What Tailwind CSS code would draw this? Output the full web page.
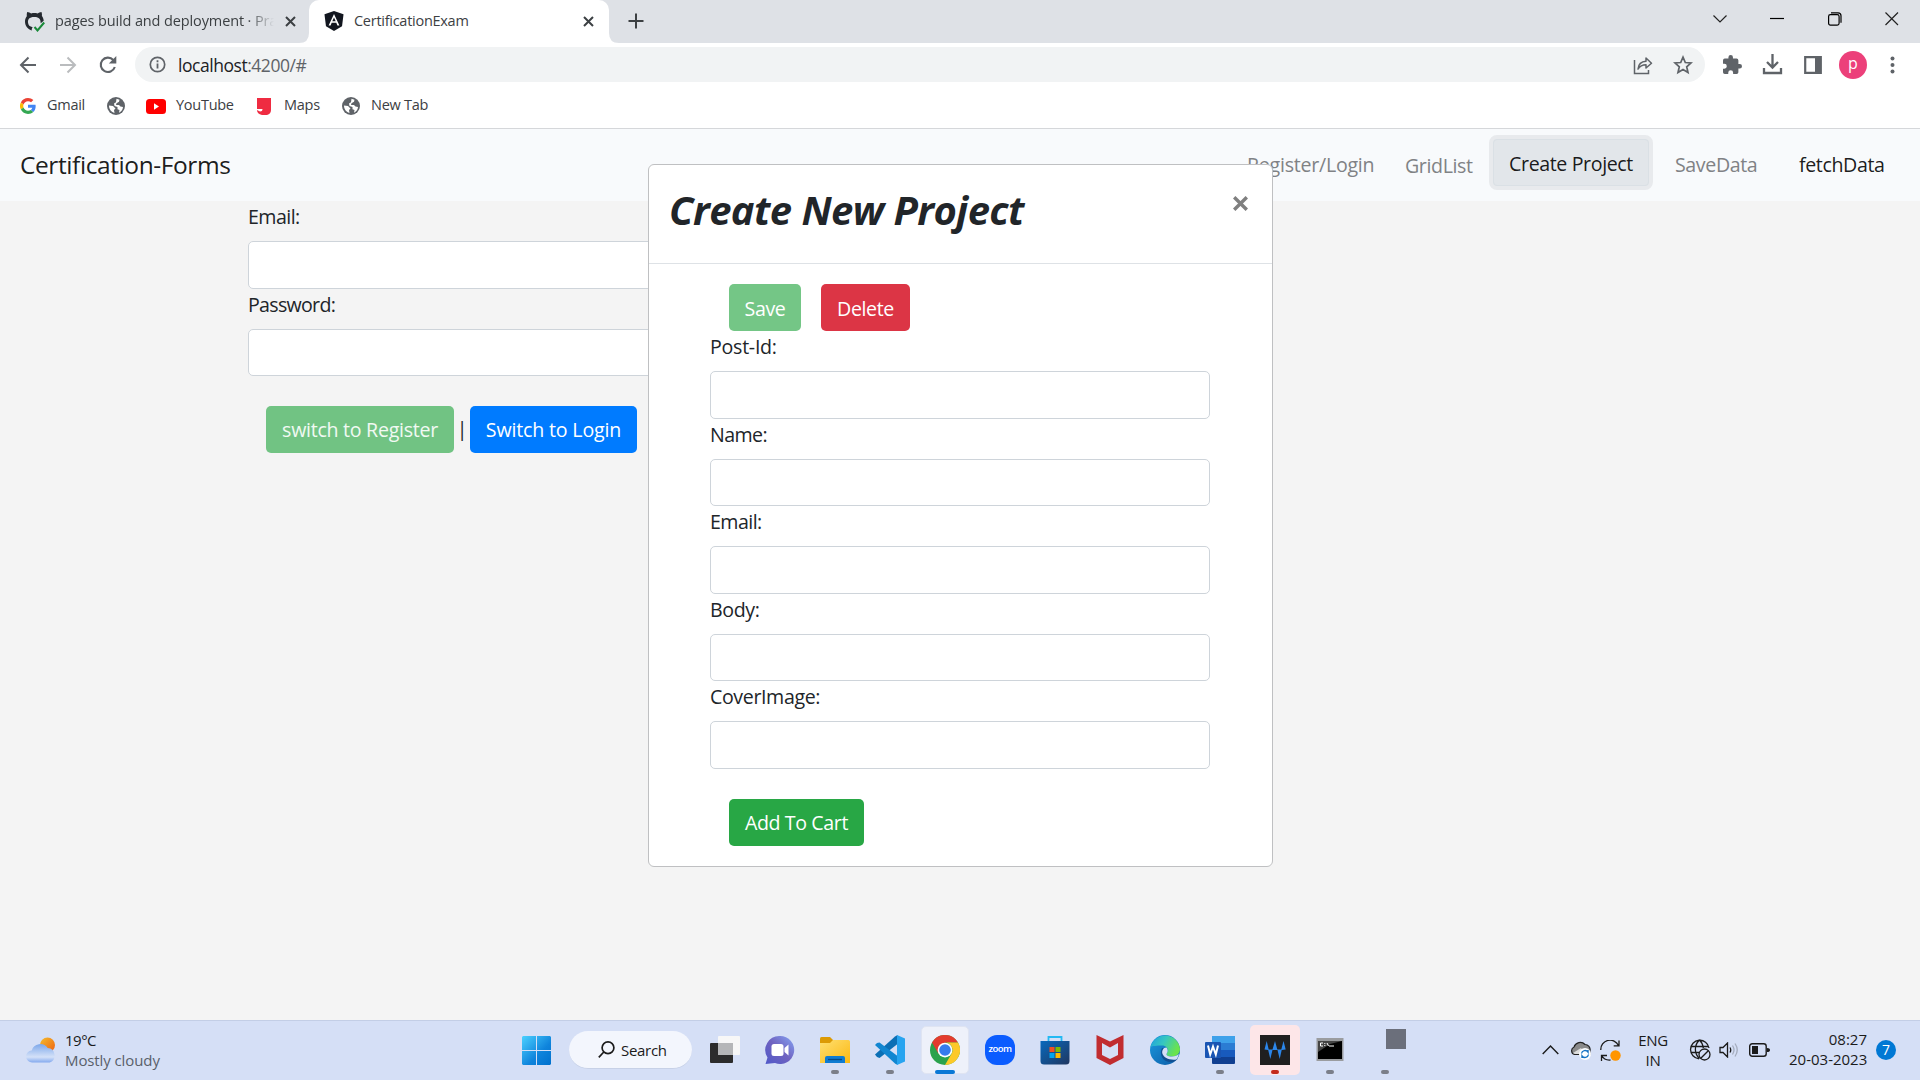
<!DOCTYPE html>
<html lang="en">
<head>
<meta charset="utf-8">
<title>CertificationExam</title>
<script src="https://cdn.jsdelivr.net/npm/@tailwindcss/browser@4"></script>
</head>
<body class="w-[1920px] h-[1080px] overflow-hidden flex flex-col whitespace-nowrap bg-[#f4f4f4] font-['Open_Sans','Noto_Sans',sans-serif] text-[#212529]">

<!-- Tab strip -->
<header class="h-[43px] shrink-0 bg-[#dee1e6] flex text-[14.500px] leading-[20px] text-[#3c4043]">
  <div class="w-[299px] flex items-center pl-[24px] pb-px">
    <svg class="size-[21px] shrink-0" viewBox="0 0 21 21"><path d="M7.5 19.5C3.5 18 1 14.700 1 10.500 1 8.500 1.600 6.700 2.800 5.200 2.600 3.700 2.800 2.200 3.200 1c1.500.1 2.900.7 4 1.500 2-.6 4.300-.6 6.300 0C14.700 1.600 16 1.100 17.500 1c.5 1.300.6 2.700.4 4.100 1 1.300 1.700 2.900 1.800 4.700l-3 2.400c0-4-1.300-6.300-6.400-6.300-5.200 0-6.600 2.300-6.300 5.700.2 2.700 1.700 4.100 4.700 4.600-.8.800-1 1.700-1 3.300z" fill="#24292f"/><path d="M10.500 16l3 3.500 6.700-8" fill="none" stroke="#1a8a3a" stroke-width="2"/></svg>
    <div class="ml-[10px] w-[219px] overflow-hidden tracking-[-0.120px] [mask-image:linear-gradient(to_right,black_88%,transparent)]">pages build and deployment · Pra</div>
    <svg class="ml-[11px] size-[11px] shrink-0" viewBox="0 0 11 11" stroke="#3c4043" stroke-width="2"><path d="M1 1l9 9M10 1l-9 9"/></svg>
  </div>
  <svg class="w-[10px] h-full shrink-0" viewBox="0 0 10 43"><path d="M10 33v10H0Q10 43 10 33z" fill="#fff"/></svg>
  <div class="w-[300px] rounded-t-[10px] bg-white flex items-center pl-[15px] pb-px">
    <svg class="size-[20px] shrink-0" viewBox="0 0 20 20"><path d="M10 0l9.500 3.300-1.500 12L10 20l-8-4.700-1.500-12z" fill="#12161f"/><path d="M10 3L4.600 14.500h2l1.100-2.700h4.600l1.100 2.700h2zm0 3.600l1.700 3.700H8.300z" fill="#fff" fill-rule="evenodd"/></svg>
    <span class="ml-[10px] w-[229px] tracking-[-0.270px]">CertificationExam</span>
    <svg class="size-[11px] shrink-0" viewBox="0 0 11 11" stroke="#3c4043" stroke-width="2"><path d="M1 1l9 9M10 1l-9 9"/></svg>
  </div>
  <svg class="w-[10px] h-full shrink-0" viewBox="0 0 10 43"><path d="M0 33v10h10Q0 43 0 33z" fill="#fff"/></svg>
  <svg class="ml-[9px] mt-[13px] size-[16px]" viewBox="0 0 16 16" stroke="#3c4043" stroke-width="2"><path d="M8 .5v15M.5 8h15"/></svg>
  <div class="ml-auto mr-[21px] flex gap-[43.500px] pt-[12px] text-black">
    <svg class="size-[14px]" viewBox="0 0 14 14" fill="none" stroke="#222" stroke-width="1.200"><path d="M.5 3.500L7 10l6.500-6.500"/></svg>
    <svg class="size-[14px]" viewBox="0 0 14 14" stroke="#000" stroke-width="1.200"><path d="M0 6.500h14"/></svg>
    <svg class="size-[14px]" viewBox="0 0 14 14" fill="none" stroke="#000" stroke-width="1.200"><rect x=".6" y="2.600" width="10.500" height="10.500" rx="1.800"/><path d="M3 .8h7q3 0 3 3v7"/></svg>
    <svg class="size-[14px]" viewBox="0 0 14 14" stroke="#222" stroke-width="1.200"><path d="M.5.5l12.500 12.500M13 .5L.5 13"/></svg>
  </div>
</header>

<!-- Toolbar -->
<div class="h-[43px] shrink-0 bg-white flex items-center pl-[19px]">
  <svg class="size-[18px]" viewBox="0 0 18 18" fill="none" stroke="#5f6368" stroke-width="2"><path d="M17 9H2.500M9.500 1.500L2 9l7.500 7.500"/></svg>
  <svg class="ml-[22px] size-[18px]" viewBox="0 0 18 18" fill="none" stroke="#babcbe" stroke-width="2"><path d="M1 9h14.500M8.500 1.500L16 9l-7.500 7.500"/></svg>
  <svg class="ml-[22px] size-[18px]" viewBox="0 0 18 18"><path d="M15.800 11A7.200 7.200 0 1 1 14.300 4" fill="none" stroke="#5f6368" stroke-width="2.100"/><path d="M17.300 0v7.500H9.800z" fill="#5f6368"/></svg>
  <div class="ml-[18px] h-[35px] w-[1570px] rounded-full bg-[#f1f3f4] flex items-center pl-[14px]">
    <svg class="size-[17px]" viewBox="0 0 17 17"><circle cx="8.500" cy="8.500" r="7.200" fill="none" stroke="#5f6368" stroke-width="1.700"/><path d="M8.500 7.500v5M8.500 4.300v1.900" stroke="#5f6368" stroke-width="1.800"/></svg>
    <span class="ml-[12px] text-[17.500px] leading-[24px] tracking-[-0.460px] text-[#5f6368]"><span class="text-[#202124]">localhost</span>:4200/#</span>
    <svg class="ml-auto size-[20px]" viewBox="0 0 20 20" fill="none" stroke="#5f6368" stroke-width="1.500"><path d="M1.500 5v13.500h14V15"/><path d="M5 14c.5-5 3.500-7.500 8-7.700V3l5.500 5.200L13 13V9.800c-3.500 0-6 1-8 4.200z" stroke-linejoin="round"/></svg>
    <svg class="ml-[20px] mr-[12px] size-[20px]" viewBox="0 0 20 20" fill="none" stroke="#5f6368" stroke-width="1.700"><path d="M10 2.200l2.300 5.300 5.700.5-4.300 3.800 1.300 5.700-5-3-5 3 1.300-5.700L2 8l5.700-.5z"/></svg>
  </div>
  <svg class="ml-[18px] size-[19px]" viewBox="2 1 21 21" fill="#5f6368"><path d="M20.500 11H19V7a2 2 0 0 0-2-2h-4V3.500a2.500 2.500 0 0 0-5 0V5H4a2 2 0 0 0-2 2v3.800h1.500a2.700 2.700 0 0 1 0 5.400H2V20a2 2 0 0 0 2 2h3.800v-1.500a2.700 2.700 0 0 1 5.400 0V22H17a2 2 0 0 0 2-2v-4h1.500a2.500 2.500 0 0 0 0-5z"/></svg>
  <svg class="ml-[20px] size-[21px]" viewBox="0 0 21 21" fill="none" stroke="#5f6368" stroke-width="2.300"><path d="M10.500 0v13M5 8l5.500 5.500L16 8M2 14v5h17v-5"/></svg>
  <svg class="ml-[21px] size-[18px]" viewBox="0 0 18 18"><path d="M1.200 1.200h15.600v15.600H1.200z" fill="none" stroke="#5f6368" stroke-width="2.200"/><path d="M11 1h6v16h-6z" fill="#5f6368"/></svg>
  <div class="ml-[17px] size-[28px] rounded-full bg-[#ec407a] text-white text-[16px] leading-[25px] text-center">p</div>
  <svg class="ml-[23px] h-[18px] w-[5px]" viewBox="0 0 5 18" fill="#5f6368"><circle cx="2.500" cy="2.500" r="2"/><circle cx="2.500" cy="9" r="2"/><circle cx="2.500" cy="15.500" r="2"/></svg>
</div>

<!-- Bookmarks -->
<div class="h-[43px] shrink-0 bg-white border-b border-[#d5d7da] flex items-center text-[14.500px] leading-[20px] tracking-[-0.270px] text-[#3c4043] pl-[20px] pb-[2px] *:[span]:-mt-[2px]">
  <svg class="size-[16px]" viewBox="0 0 48 48"><path fill="#EA4335" d="M24 9.500c3.500 0 6.700 1.200 9.200 3.600l6.900-6.900C35.900 2.400 30.500 0 24 0 14.600 0 6.500 5.400 2.600 13.200l8 6.200C12.400 13.700 17.700 9.500 24 9.500z"/><path fill="#4285F4" d="M47 24.500c0-1.600-.2-3.100-.4-4.500H24v9h12.900c-.6 3-2.300 5.500-4.800 7.200l7.700 6C44.400 38 47 31.800 47 24.500z"/><path fill="#FBBC05" d="M10.500 28.600a14.500 14.500 0 0 1 0-9.200l-8-6.200a24 24 0 0 0 0 21.600z"/><path fill="#34A853" d="M24 48c6.500 0 11.900-2.100 15.900-5.800l-7.700-6c-2.200 1.400-4.900 2.300-8.200 2.300-6.300 0-11.600-4.200-13.500-9.900l-8 6.200C6.500 42.600 14.600 48 24 48z"/></svg>
  <span class="ml-[11px] w-[60px]">Gmail</span>
  <svg class="size-[18px]" viewBox="0 0 18 18"><circle cx="9" cy="9" r="9" fill="#5f6368"/><path d="M2 8.500l4 .5 2.500 2.500L7 13l.5 3C4.500 15 2 12.500 2 8.500zM9.500 1.800l3 1-.5 2-2.500 1.400-.5 1.800h3l1.500 1.500 2.500.5c-.2 2.800-1.800 4.800-4 5.800L12.500 13l-2-.8V10L7.500 9 7 6.500l2-1.300z" fill="#fff"/></svg>
  <svg class="ml-[21px] w-[20px] h-[15px]" viewBox="0 0 20 15"><rect width="20" height="15" rx="3.500" fill="#f00"/><path d="M8 4.300v6.400l5-3.200z" fill="#fff"/></svg>
  <span class="ml-[10px] w-[81px]">YouTube</span>
  <svg class="w-[14px] h-[17px]" viewBox="0 0 14 17"><path d="M0 0h14v12q0 4-4 5H5q-5-1-5-5l3 1.500q2.500 0 2.500-2.500H0z" fill="#ef2b41"/></svg>
  <span class="ml-[13px] w-[58px]">Maps</span>
  <svg class="size-[18px]" viewBox="0 0 18 18"><circle cx="9" cy="9" r="9" fill="#5f6368"/><path d="M2 8.500l4 .5 2.500 2.500L7 13l.5 3C4.500 15 2 12.500 2 8.500zM9.500 1.800l3 1-.5 2-2.500 1.400-.5 1.800h3l1.500 1.500 2.500.5c-.2 2.800-1.800 4.800-4 5.800L12.500 13l-2-.8V10L7.500 9 7 6.500l2-1.300z" fill="#fff"/></svg>
  <span class="ml-[11px]">New Tab</span>
</div>

<!-- Application -->
<main class="relative grow text-[19.600px] leading-[30px] tracking-[-0.380px]">
  <nav class="h-[72px] bg-[#f8fafc] flex items-start pl-[20px] pt-[6px]">
    <span class="mt-[11px] text-[24.500px] leading-[38px] tracking-[-0.410px] text-black/90">Certification-Forms</span>
    <div class="ml-auto mr-[36px] flex items-start text-[#808285]">
      <span class="mt-[15px] w-[158px] tracking-[-0.250px]">Register/Login</span>
      <span class="mt-[16px] w-[84px]">GridList</span>
      <button class="h-[55px] w-[164px] rounded-[8px] border-[4px] border-[#e8eaed] bg-[#e2e6ea] text-black/90"><span class="block h-[47px] rounded-[4px] border border-[#dae0e5] pt-[9px]">Create Project</span></button>
      <span class="ml-[22px] mt-[15px] w-[124px]">SaveData</span>
      <span class="mt-[15px] w-[85px] text-black/90">fetchData</span>
    </div>
  </nav>
  <form class="ml-[248px] w-[620px]">
    <label class="block pt-px mb-[9px] tracking-[-0.550px]">Email:</label>
    <input class="block h-[47.500px] w-full rounded-[5px] border border-[#ced4da] bg-white">
    <label class="block pt-px mb-[9px] tracking-[-0.700px]">Password:</label>
    <input class="block h-[47.500px] w-full rounded-[5px] border border-[#ced4da] bg-white">
    <div class="mt-[29.500px] ml-[18px] flex items-center">
      <button type="button" class="h-[47.500px] w-[188px] rounded-[5px] bg-[#71c383] pt-[2px] tracking-[-0.280px] text-white/90">switch to Register</button>
      <span class="w-[16px] text-center">|</span>
      <button type="button" class="h-[47.500px] w-[167px] rounded-[5px] bg-[#007bff] pt-[2px] tracking-[-0.170px] text-white">Switch to Login</button>
    </div>
  </form>

  <!-- Modal -->
  <section class="absolute left-[648px] top-[35px] w-[625px] h-[703px] rounded-[6px] border border-[#bfc0c2] bg-white">
    <div class="h-[99px] border-b border-[#dee2e6] flex justify-between pl-[20px] pr-[24px]">
      <h1 class="mt-[21px] text-[40px] leading-[48px] font-bold italic tracking-[-0.580px]">Create New Project</h1>
      <svg class="mt-[31px] size-[15px]" viewBox="0 0 15 15" stroke="#7f7f7f" stroke-width="3.400"><path d="M1.200 1.200l12.600 12.600M13.800 1.200L1.200 13.800"/></svg>
    </div>
    <div class="pt-[19.500px] pl-[61px] pr-[62px]">
      <div class="ml-[19px] flex gap-[20px]">
        <button class="h-[47.500px] w-[72px] rounded-[5px] bg-[#74c686] pt-[3px] text-white">Save</button>
        <button class="h-[47.500px] w-[89px] rounded-[5px] bg-[#dc3545] pt-[3px] text-white">Delete</button>
      </div>
      <label class="block pt-px mb-[9px] tracking-[-0.260px]">Post-Id:</label>
      <input class="block h-[47.500px] w-full rounded-[5px] border border-[#ced4da]">
      <label class="block pt-px mb-[9px] tracking-[-0.600px]">Name:</label>
      <input class="block h-[47.500px] w-full rounded-[5px] border border-[#ced4da]">
      <label class="block pt-px mb-[9px] tracking-[-0.550px]">Email:</label>
      <input class="block h-[47.500px] w-full rounded-[5px] border border-[#ced4da]">
      <label class="block pt-px mb-[9px]">Body:</label>
      <input class="block h-[47.500px] w-full rounded-[5px] border border-[#ced4da]">
      <label class="block pt-px mb-[9px]">CoverImage:</label>
      <input class="block h-[47.500px] w-full rounded-[5px] border border-[#ced4da]">
      <button class="mt-[30px] ml-[19px] h-[47.500px] w-[135px] rounded-[5px] bg-[#28a745] pt-[2px] text-white">Add To Cart</button>
    </div>
  </section>
</main>

<!-- Taskbar -->
<footer class="h-[60px] shrink-0 bg-[#d5dff6] border-t border-[#c3cee6] pb-px flex items-center text-[15px] leading-[20px] text-[#1b1b1b]">
  <svg class="ml-[26px] w-[30px] h-[26px]" viewBox="0 0 30 26">
    <defs><linearGradient id="sun" x1="0" y1="0" x2="1" y2="1"><stop stop-color="#f5bd2c"/><stop offset="1" stop-color="#ee5f10"/></linearGradient><linearGradient id="cl" x1="0" y1="0" x2="0" y2="1"><stop stop-color="#7ea8ea"/><stop offset=".7" stop-color="#d4e1f8"/><stop offset="1" stop-color="#83a9ee"/></linearGradient></defs>
    <circle cx="21.500" cy="8" r="7.500" fill="url(#sun)"/><path d="M6.500 25.500a6 6 0 0 1-.8-12 9 9 0 0 1 16-2.500 7.500 7.500 0 0 1 2 14.500z" fill="url(#cl)"/></svg>
  <div class="ml-[9px] w-[457px]"><div class="tracking-[-0.500px]">19°C</div><div class="tracking-[-0.100px] text-[#5a5f6b]">Mostly cloudy</div></div>
  <svg class="size-[29px]" viewBox="0 0 29 29"><defs><linearGradient id="win" x1="0" y1="0" x2="1" y2="1"><stop stop-color="#4bd1ff"/><stop offset=".6" stop-color="#0f84dc"/><stop offset="1" stop-color="#0070cd"/></linearGradient></defs><path d="M1 0h13v14H0V1zM15 0h13l1 1v13H15zM0 15h14v14H1l-1-1zM15 15h14v13l-1 1H15z" fill="url(#win)"/></svg>
  <div class="ml-[18px] h-[38px] w-[123px] rounded-full bg-[#f3f6fd] border-b border-[#c7d1e7] flex items-center pl-[29px]">
    <svg class="size-[17px]" viewBox="0 0 17 17" fill="none" stroke="#1b1b1b" stroke-width="1.700"><circle cx="10" cy="6.800" r="5.900"/><path d="M5.800 11L.8 16.300"/></svg>
    <span class="ml-[6px] tracking-[-0.300px]">Search</span>
  </div>
  <div class="ml-[5.500px] flex h-[50px] *:w-[55px] *:relative *:flex *:flex-col *:items-center *:pt-[10px]">
    <div><svg class="size-[30px]" viewBox="0 0 30 30"><rect y="8" width="23" height="20" rx="1" fill="#2c2c2c"/><rect x="8" y="1" width="22" height="19" rx="1" fill="#f7f7f7"/><path d="M8 8h15v12H8z" fill="#b5b6b8"/></svg></div>
    <div><svg class="size-[30px]" viewBox="0 0 30 30"><defs><linearGradient id="ch" x1="0" y1="1" x2="1" y2="0"><stop stop-color="#5059c9"/><stop offset=".5" stop-color="#6f62c0"/><stop offset="1" stop-color="#86a5f4"/></linearGradient></defs><path d="M15 1a14 14 0 1 1-5 27L.5 29l2-6.500A14 14 0 0 1 15 1z" fill="url(#ch)"/><rect x="6.500" y="9" width="12" height="12" rx="2.500" fill="#fff"/><path d="M19.500 13l4-3.500v11l-4-3.500z" fill="#fff"/></svg></div>
    <div><svg class="size-[30px]" viewBox="0 0 30 30"><defs><linearGradient id="fo" x1="0" y1="0" x2="1" y2="1"><stop stop-color="#ffdf70"/><stop offset="1" stop-color="#fbb913"/></linearGradient></defs><path d="M0 3.500Q0 2 1.500 2H10l3 3v4H0z" fill="#dc9a04"/><path d="M0 8h10l3-3h15.500Q30 5 30 6.500V28H0z" fill="url(#fo)"/><path d="M5 28v-5q0-2 2-2h16q2 0 2 2v5z" fill="#0f7cd2"/><path d="M8 24.500h14" stroke="#074a86" stroke-width="1.300"/></svg><i class="mt-[5px] h-[4px] w-[8px] rounded-full bg-[#7b7f89]"></i></div>
    <div><svg class="size-[30px]" viewBox="0 0 30 30"><path d="M0 19.500l20-18L22.500 0v9L4.500 23 2 22z" fill="#0b6fb5"/><path d="M0 10l2-2 2.500-.5L22.500 21v9L20 28.500z" fill="#1186d1"/><path d="M22 0l8 3.500v23L22 30z" fill="#27a4f0"/></svg><i class="mt-[5px] h-[4px] w-[8px] rounded-full bg-[#7b7f89]"></i></div>
    <div><b class="absolute left-[3.500px] top-[1px] size-[48px] rounded-[5px] border border-[#dfe4f2] bg-[#eef1fa]"></b><svg class="relative size-[30px]" viewBox="0 0 48 48"><circle cx="24" cy="24" r="24" fill="#2ba24c"/><path d="M3.200 12A24 24 0 0 1 44.800 12H24L13.600 30z" fill="#e33b2e"/><path d="M44.800 12A24 24 0 0 1 24 48l10.400-18A12 12 0 0 0 24 12z" fill="#fdc928"/><circle cx="24" cy="24" r="11.800" fill="#fff"/><circle cx="24" cy="24" r="9.300" fill="#367bed"/></svg><i class="relative mt-[5px] h-[4px] w-[20px] rounded-full bg-[#0a78d6]"></i></div>
    <div><div class="size-[30px] rounded-[12px] bg-[#0b5cff] text-center text-[9.500px] leading-[27px] tracking-[-0.500px] font-semibold text-white">zoom</div></div>
    <div><svg class="size-[30px]" viewBox="0 0 30 30"><defs><linearGradient id="st" x1="0" y1="0" x2="1" y2="1"><stop stop-color="#0869bd"/><stop offset="1" stop-color="#203760"/></linearGradient></defs><path d="M8.500 8V2h13v6" fill="none" stroke="#24b9f3" stroke-width="1.800"/><path d="M.5 6h29v20q0 3.500-3.500 3.500H4q-3.500 0-3.500-3.500z" fill="url(#st)"/><path d="M9.500 12H14.500v5H9.500z" fill="#f25022"/><path d="M15.500 12h5v5h-5z" fill="#7fba00"/><path d="M9.500 18h5v5h-5z" fill="#00a4ef"/><path d="M15.500 18h5v5h-5z" fill="#ffb900"/></svg></div>
    <div><svg class="size-[30px]" viewBox="0 0 30 30"><path d="M1.500 0L15 6.500 28.500 0v23L15 30 1.500 23zM7 8v12l8 4 8-4V8l-8 4.500z" fill="#c12d30" fill-rule="evenodd"/></svg></div>
    <div><svg class="size-[30px]" viewBox="0 0 30 30"><defs><linearGradient id="e1" x1="0" y1="0" x2="1" y2=".4"><stop stop-color="#1c9fe0"/><stop offset=".5" stop-color="#36c7c0"/><stop offset="1" stop-color="#6be34d"/></linearGradient><linearGradient id="e2" x1="0" y1="0" x2="1" y2="1"><stop stop-color="#1a9be0"/><stop offset="1" stop-color="#0c59a4"/></linearGradient></defs><circle cx="15" cy="15" r="15" fill="url(#e2)"/><path d="M.5 12A15 15 0 0 1 30 14c0 5-4 7.500-8 7.500-4.500 0-6.500-1.500-5-3.500 2-2.500.5-7.500-5-7.500C7 10.500 2 11 .5 12z" fill="url(#e1)"/><path d="M12 13c-3 6 0 14 9 14 3 0 5-1 7-3.500-6 1.500-12 .5-14-4-.8-2-.5-4 .5-6z" fill="#114f91"/><path d="M16.500 12.500c1.500 2 1.500 4 .5 5.500-1.500 2 .5 3.500 5 3.500 3 0 5-1 7-2.500-.5 2-1.500 4-2.500 5.500C19 25.500 14 22.500 12.500 19c-1-3 .5-6.500 4-6.500z" fill="#d5dff6"/></svg></div>
    <div><svg class="size-[30px]" viewBox="0 0 30 30"><path d="M7 1h23v7H7z" fill="#3ea1ea"/><path d="M7 8h23v7H7z" fill="#2b7cd3"/><path d="M7 15h23v7H7z" fill="#185abd"/><path d="M7 22h23v6q0 1-1 1H8q-1 0-1-1z" fill="#103f91"/><rect y="7" width="16" height="16" rx="1" fill="#1a55b3"/><path d="M3 10.500l2.200 9L8 11.500l2.800 8 2.200-9" fill="none" stroke="#fff" stroke-width="2"/></svg><i class="mt-[5px] h-[4px] w-[8px] rounded-full bg-[#7b7f89]"></i></div>
    <div><b class="absolute left-[2.500px] top-0 size-[50px] rounded-[5px] bg-[#fde6e8]"></b><svg class="relative size-[30px]" viewBox="0 0 30 30"><path d="M0 0h30v30H0z" fill="#1f1f1f"/><path d="M4.500 14.500L6.700 6l2 8.500h3.800L15 6l2.300 8.500h4L23.500 6l2.200 8.500-4 .5-2 9-2.200-9h-5L10.300 24 8.200 15z" fill="#2b86ea"/></svg><i class="relative mt-[5px] h-[4px] w-[8px] rounded-full bg-[#c42b1c]"></i></div>
    <div><svg class="size-[30px]" viewBox="0 0 30 30"><rect x="1.500" y="3" width="27" height="23" fill="#9a9c9f"/><path d="M3 6h24v18H3z" fill="#000"/><path d="M3 6h24l-12 3-12 8z" fill="#444"/><path d="M8 8H5.500v3H8M9.800 8v1m0 1v1M12 8l1.500 3M14 11h5" stroke="#fff" fill="none"/></svg><i class="mt-[5px] h-[4px] w-[8px] rounded-full bg-[#7b7f89]"></i></div>
    <div><b class="absolute left-[38.500px] top-[4px] size-[20px] -translate-x-[10px] bg-[#6b6f7b]"></b><i class="mt-[35px] h-[4px] w-[8px] rounded-full bg-[#7b7f89]"></i></div>
  </div>
  <div class="ml-auto mr-[24px] flex items-center">
    <svg class="w-[17px] h-[10px]" viewBox="0 0 17 10" fill="none" stroke="#1b1b1b" stroke-width="1.400"><path d="M.7 9l7.800-8 7.800 8"/></svg>
    <svg class="ml-[11px] w-[21px] h-[20px]" viewBox="0 0 21 20"><path d="M4.500 14.500A4 4 0 0 1 4 7a6.500 6.500 0 0 1 11-2.500 5 5 0 0 1 5 6v4z" fill="#8a8a8a" stroke="#222" stroke-width="1.200"/><path d="M3 13l8-5 4 6H5z" fill="#ddd"/><circle cx="15" cy="14" r="6" fill="#fff"/><path d="M11.500 13.500a3.600 3.600 0 0 1 6.500-1.500V10M18.500 14.500a3.600 3.600 0 0 1-6.500 1.500v2" stroke="#1673c4" stroke-width="1.400" fill="none"/></svg>
    <svg class="ml-[9px] size-[21px]" viewBox="0 0 21 21" fill="none" stroke="#1b1b1b" stroke-width="1.300"><path d="M.8 10A9.300 9.300 0 0 1 18.500 5.500M19 .5v5.300h-5.300M7 15.500H1.500V21M1.500 15.500a9.300 9.300 0 0 0 9 4.500"/><circle cx="15.500" cy="15.500" r="5.200" fill="#ff9500" stroke="none"/></svg>
    <div class="ml-[17px] w-[30px] text-center tracking-[-0.300px]"><div>ENG</div><div>IN</div></div>
    <svg class="ml-[21px] size-[22px]" viewBox="0 0 22 22" fill="none" stroke="#1b1b1b" stroke-width="1.300"><path d="M20 9A9.300 9.300 0 1 0 10 19.800M2 7.500h17M1.500 13.500h9M10.500 1c-5.500 5-5.500 13.500 0 18.500M10.500 1c2 2 3.500 4.500 3.800 8"/><circle cx="15.500" cy="15.500" r="5.500"/><path d="M11.800 19.200l7.500-7.500"/></svg>
    <svg class="ml-[8px] w-[20px] h-[16px]" viewBox="0 0 20 16" fill="none" stroke="#1b1b1b" stroke-width="1.300"><path d="M1 5.500v5h3L8.500 15V1L4 5.500zM11 5.500q1.500 2.500 0 5"/><path d="M13.500 3.500q3 4.500 0 9M16 1.500q4.500 6.500 0 13" stroke="#a4acbd"/></svg>
    <svg class="ml-[10px] w-[21px] h-[14px]" viewBox="0 0 21 14"><rect x=".7" y=".7" width="16.500" height="12.500" rx="2.500" fill="none" stroke="#1b1b1b" stroke-width="1.400"/><rect x="3" y="3" width="6" height="8" fill="#1b1b1b"/><path d="M18 5q3 0 3 2t-3 2z" fill="#1b1b1b"/></svg>
    <div class="ml-[19px] w-[78px] text-right -mt-[2px]"><div>08:27</div><div>20-03-2023</div></div>
    <div class="ml-[9px] size-[20px] rounded-full bg-[#0078d4] text-center text-[14px] leading-[20px] text-white">7</div>
  </div>
</footer>
</body>
</html>
